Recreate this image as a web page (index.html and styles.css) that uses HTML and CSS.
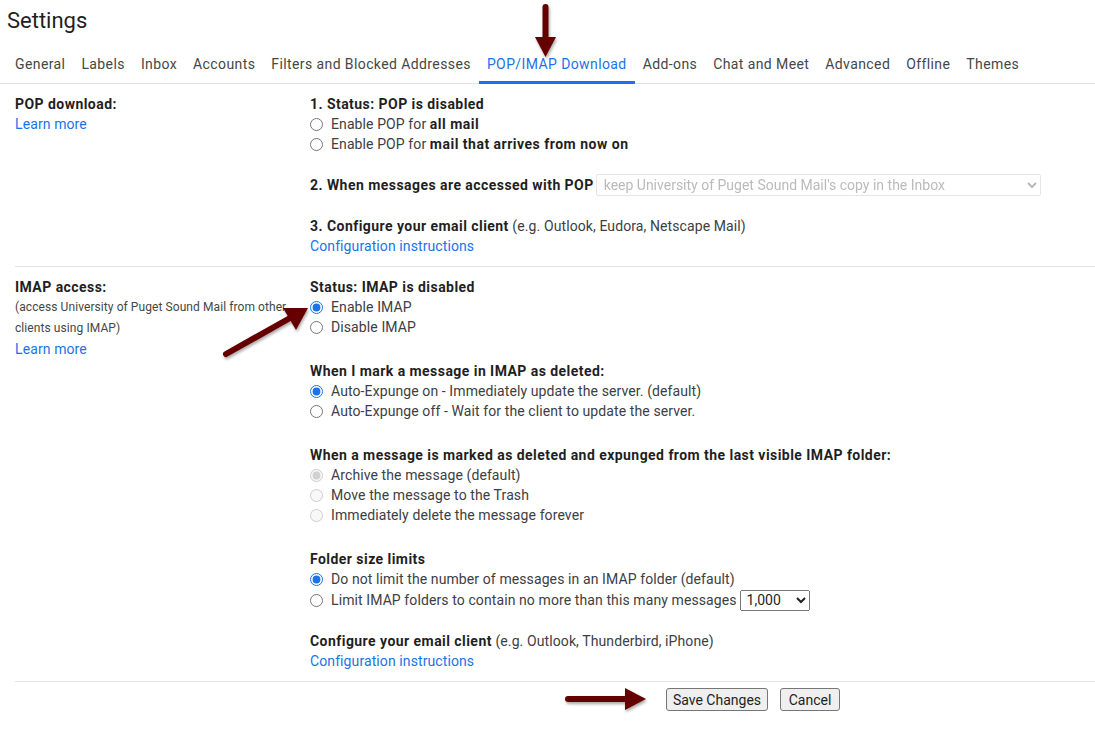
FILE: index.html
```html
<!DOCTYPE html>
<html lang="en">
<head>
  <meta charset="UTF-8">
  <title>Settings</title>
  <link rel="stylesheet" href="styles.css">
</head>
<body>
  <div class="page">
    <h1 class="title">Settings</h1>

    <nav class="tabs">
      <a class="tab">General</a>
      <a class="tab">Labels</a>
      <a class="tab">Inbox</a>
      <a class="tab">Accounts</a>
      <a class="tab">Filters and Blocked Addresses</a>
      <a class="tab active">POP/IMAP Download</a>
      <a class="tab">Add-ons</a>
      <a class="tab">Chat and Meet</a>
      <a class="tab">Advanced</a>
      <a class="tab">Offline</a>
      <a class="tab">Themes</a>
    </nav>

    <div class="row">
      <div class="label-col">
        <div class="label">POP download:</div>
        <a class="link">Learn more</a>
      </div>
      <div class="options-col">
        <div class="group">
          <div class="heading">1. Status: POP is disabled</div>
          <label class="option"><input type="radio" name="pop">Enable POP for&nbsp;<b>all mail</b></label>
          <label class="option"><input type="radio" name="pop">Enable POP for&nbsp;<b>mail that arrives from now on</b></label>
        </div>
        <div class="group select-line">
          <span class="heading">2. When messages are accessed with POP</span>
          <select class="pop-select" disabled>
            <option>keep University of Puget Sound Mail's copy in the Inbox</option>
          </select>
        </div>
        <div class="group">
          <div><span class="heading">3. Configure your email client</span> (e.g. Outlook, Eudora, Netscape Mail)</div>
          <a class="link">Configuration instructions</a>
        </div>
      </div>
    </div>

    <div class="row">
      <div class="label-col">
        <div class="label">IMAP access:</div>
        <div class="note">(access University of Puget Sound Mail from other clients using IMAP)</div>
        <a class="link">Learn more</a>
      </div>
      <div class="options-col imap">
        <div class="group">
          <div class="heading">Status: IMAP is disabled</div>
          <label class="option"><input type="radio" name="imap" checked>Enable IMAP</label>
          <label class="option"><input type="radio" name="imap">Disable IMAP</label>
        </div>
        <div class="group">
          <div class="heading">When I mark a message in IMAP as deleted:</div>
          <label class="option"><input type="radio" name="expunge" checked>Auto-Expunge on - Immediately update the server. (default)</label>
          <label class="option"><input type="radio" name="expunge">Auto-Expunge off - Wait for the client to update the server.</label>
        </div>
        <div class="group">
          <div class="heading">When a message is marked as deleted and expunged from the last visible IMAP folder:</div>
          <label class="option"><input type="radio" name="expunged" checked disabled>Archive the message (default)</label>
          <label class="option"><input type="radio" name="expunged" disabled>Move the message to the Trash</label>
          <label class="option"><input type="radio" name="expunged" disabled>Immediately delete the message forever</label>
        </div>
        <div class="group">
          <div class="heading">Folder size limits</div>
          <label class="option"><input type="radio" name="limit" checked>Do not limit the number of messages in an IMAP folder (default)</label>
          <label class="option tall"><input type="radio" name="limit">Limit IMAP folders to contain no more than this many messages
            <select class="size-select">
              <option>1,000</option>
              <option>2,000</option>
              <option>5,000</option>
              <option>10,000</option>
            </select>
          </label>
        </div>
        <div class="group last">
          <div><span class="heading">Configure your email client</span> (e.g. Outlook, Thunderbird, iPhone)</div>
          <a class="link">Configuration instructions</a>
        </div>
      </div>
    </div>

    <div class="actions">
      <button class="btn-save">Save Changes</button>
      <button class="btn-cancel">Cancel</button>
    </div>

    <!-- annotation arrows drawn over the screenshot -->
    <svg class="arrows" width="1095" height="737" viewBox="0 0 1095 737">
      <defs>
        <filter id="shadow" x="-20%" y="-20%" width="140%" height="140%">
          <feDropShadow dx="1" dy="2" stdDeviation="1.5" flood-color="#000" flood-opacity="0.35"/>
        </filter>
      </defs>
      <g fill="#650000" stroke="#650000" filter="url(#shadow)">
        <line x1="545.5" y1="7" x2="545.5" y2="40" stroke-width="6" stroke-linecap="round"/>
        <polygon points="535,37 556,37 545.5,57" stroke="none"/>

        <line x1="226" y1="354" x2="290" y2="318" stroke-width="6" stroke-linecap="round"/>
        <polygon points="308,308 283,308 296,330" stroke="none"/>

        <line x1="568" y1="699" x2="628" y2="699" stroke-width="6" stroke-linecap="round"/>
        <polygon points="625,688 625,710 646,699" stroke="none"/>
      </g>
    </svg>
  </div>
</body>
</html>
```

FILE: styles.css
```css
body {
  margin: 0;
  font-family: Roboto, "Liberation Sans", sans-serif;
  font-size: 14px;
  color: #1f1f1f;
  background-color: #fff;
}
.page {
  position: relative;
  width: 1095px;
  height: 737px;
  overflow: hidden;
}
.title {
  margin: 0;
  padding: 7px 0 0 7px;
  font-size: 22px;
  font-weight: 400;
  line-height: 28px;
  color: #1f1f1f;
}
.tabs {
  display: flex;
  margin-top: 9px;
  padding-left: 7px;
  border-bottom: 1px solid #e3e3e3;
}
.tab {
  padding: 10px 8px 7px;
  line-height: 20px;
  letter-spacing: 0.4px;
  color: #444746;
  border-bottom: 3px solid transparent;
  margin-bottom: -1px;
  white-space: nowrap;
}
.tab.active {
  color: #1a73e8;
  border-bottom-color: #1a73e8;
}
.row {
  display: flex;
  margin-left: 15px;
  padding: 10px 0;
  border-bottom: 1px solid #e3e3e3;
  line-height: 20px;
  letter-spacing: 0.1px;
  color: #3c4043;
}
.label-col {
  width: 295px;
  flex-shrink: 0;
  padding-right: 12px;
  box-sizing: border-box;
}
.label,
.heading,
.option b {
  font-weight: 700;
  letter-spacing: 0.45px;
  color: #1f1f1f;
}
.option b {
  letter-spacing: 0.5px;
}
.note {
  font-size: 12px;
  line-height: 21px;
  letter-spacing: 0.08px;
  color: #444746;
}
.link {
  display: block;
  color: #1a73e8;
  cursor: pointer;
}
.options-col {
  flex: 1;
}
.group + .group {
  margin-top: 20px;
}
.imap .group + .group {
  margin-top: 24px;
}
.imap .group.last {
  margin-top: 20px;
}
.option {
  display: flex;
  align-items: center;
  height: 20px;
  white-space: nowrap;
}
.option.tall {
  height: 22px;
}
.option input[type="radio"] {
  width: 13px;
  height: 13px;
  margin: 0 8px 0 0;
  accent-color: #1a73e8;
}
.select-line {
  display: flex;
  align-items: center;
  height: 22px;
  gap: 2px;
}
.pop-select {
  width: 445px;
  height: 22px;
  font-family: inherit;
  font-size: 14px;
  color: #9e9e9e;
  background-color: #fff;
  border: 1px solid #dcdcdc;
  border-radius: 2px;
  padding: 0 3px;
}
.size-select {
  width: 70px;
  height: 21px;
  margin-left: 3px;
  font-family: inherit;
  font-size: 14px;
  color: #1f1f1f;
  padding: 0 2px;
}
.actions {
  display: flex;
  gap: 12px;
  padding: 6px 0 0 666px;
}
.actions button {
  height: 23px;
  padding: 0;
  font-family: inherit;
  font-size: 14px;
  color: #1f1f1f;
  background-color: #efefef;
  border: 1px solid #767676;
  border-radius: 3px;
}
.btn-save {
  width: 102px;
}
.btn-cancel {
  width: 60px;
}
.arrows {
  position: absolute;
  left: 0;
  top: 0;
  pointer-events: none;
}
```
